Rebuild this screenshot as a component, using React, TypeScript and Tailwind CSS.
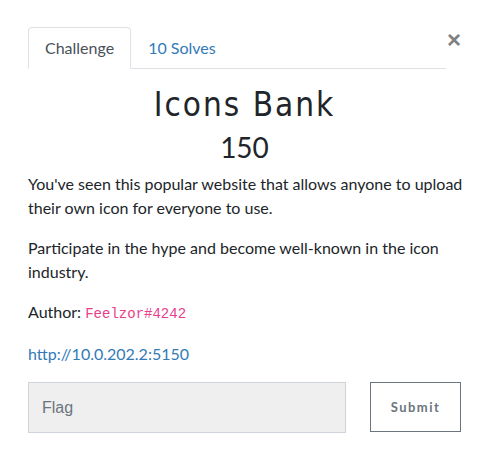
import React from 'react';

const App: React.FC = () => {
  return (
    <div className="min-h-screen bg-white text-[#212529] font-['Lato',sans-serif] text-base leading-6">
      <div className="px-[28px] pt-[27px]">
        {/* Tabs + close */}
        <div className="flex items-start">
          <div className="flex flex-1 border-b border-[#dee2e6]">
            <div className="-mb-px rounded-t border border-[#dee2e6] border-b-white bg-white px-4 py-2 text-[#495057]">
              Challenge
            </div>
            <div className="-mb-px border border-transparent px-4 py-2 text-[#337ab7]">10 Solves</div>
          </div>
          <button className="ml-px mt-[1px] text-[24px] font-bold leading-6 text-[#808080] font-['Liberation_Sans',sans-serif]">
            ×
          </button>
        </div>

        {/* Title */}
        <h3 className="mt-[18px] mb-0 text-center font-['DejaVu_Sans_Condensed','DejaVu_Sans',sans-serif] text-[33px] leading-[36px] tracking-[2px] text-[#212529]">
          Icons Bank
        </h3>
        <h4 className="mb-2 mt-[7px] text-center text-[28px] leading-[34px]">150</h4>

        {/* Description */}
        <p className="mb-4 -mr-[10px]">
          You've seen this popular website that allows anyone to upload their own icon for everyone to use.
        </p>
        <p className="mb-4">Participate in the hype and become well-known in the icon industry.</p>
        <p className="mb-4">
          Author: <code className="font-['Liberation_Mono',monospace] text-[14px] text-[#e83e8c]">Feelzor#4242</code>
        </p>
        <p className="mb-4">
          <a href="#" className="text-[#337ab7]">
            http://10.0.202.2:5150
          </a>
        </p>

        {/* Flag form */}
        <div className="flex items-start">
          <input
            type="text"
            placeholder="Flag"
            className="h-[51px] w-[318px] border border-[#ced4da] bg-[#efefef] pl-[13px] font-['Liberation_Sans',sans-serif] text-base text-[#495057] placeholder:text-[#6c757d] outline-none"
          />
          <button className="ml-auto h-[50px] w-[91px] border border-[#6c757d] bg-white text-[13px] font-bold tracking-[1.5px] text-[#6c757d]">
            Submit
          </button>
        </div>
      </div>
    </div>
  );
};

export default App;
